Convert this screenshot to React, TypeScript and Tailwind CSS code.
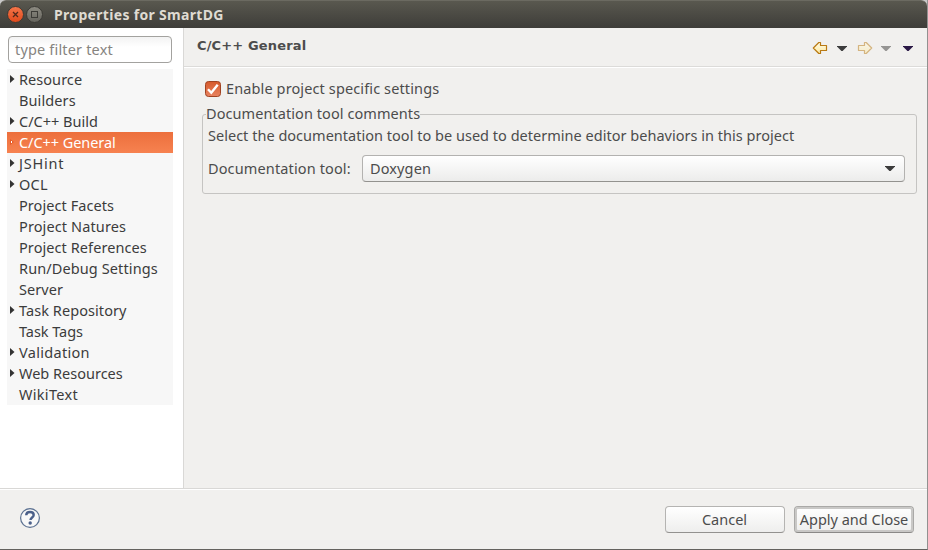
import React from "react";

type TreeItem = { label: string; expandable?: boolean; selected?: boolean; tracking: string };

const items: TreeItem[] = [
  { label: "Resource", expandable: true, tracking: "tracking-[0.05px]" },
  { label: "Builders", tracking: "tracking-[0.1px]" },
  { label: "C/C++ Build", expandable: true, tracking: "tracking-[0px]" },
  { label: "C/C++ General", expandable: true, selected: true, tracking: "tracking-[-0.06px]" },
  { label: "JSHint", expandable: true, tracking: "tracking-[0.8px]" },
  { label: "OCL", expandable: true, tracking: "tracking-[0.3px]" },
  { label: "Project Facets", tracking: "tracking-[0.07px]" },
  { label: "Project Natures", tracking: "tracking-[0.12px]" },
  { label: "Project References", tracking: "tracking-[0.08px]" },
  { label: "Run/Debug Settings", tracking: "tracking-[0.11px]" },
  { label: "Server", tracking: "tracking-[0.08px]" },
  { label: "Task Repository", expandable: true, tracking: "tracking-[0.07px]" },
  { label: "Task Tags", tracking: "tracking-[-0.05px]" },
  { label: "Validation", expandable: true, tracking: "tracking-[0.3px]" },
  { label: "Web Resources", expandable: true, tracking: "tracking-[0px]" },
  { label: "WikiText", tracking: "tracking-[0.3px]" },
];

function Caret({ className }: { className: string }) {
  return (
    <svg width="10" height="5" viewBox="0 0 10 5" className={className}>
      <path d="M0 0h10v.6L5.6 5H4.4L0 .6z" fill="currentColor" />
    </svg>
  );
}

function Arrow({ forward = false }: { forward?: boolean }) {
  return (
    <svg width="16" height="14" viewBox="0 0 16 14" className={forward ? "-scale-x-100 opacity-50" : ""}>
      <defs>
        <linearGradient id={forward ? "af" : "ab"} x1="0" y1="0" x2="0" y2="1">
          <stop offset="0" stopColor="#fffbe6" />
          <stop offset="1" stopColor="#fde9a0" />
        </linearGradient>
      </defs>
      <path d="M1.3 7 6.8 1.5H8.5V4.5H14.5V9.5H8.5V12.5H6.8z" fill={forward ? "url(#af)" : "url(#ab)"} stroke="#b97a14" strokeWidth="1.2" strokeLinejoin="round" />
    </svg>
  );
}

function TitleBar() {
  return (
    <header className="flex h-7 shrink-0 items-center rounded-t-[6px] border-t border-[#6b6a61] bg-gradient-to-b from-[#59584f] to-[#3e3d39] pl-[7px]">
      <svg width="36" height="18" viewBox="0 0 36 18">
        <defs>
          <linearGradient id="close" x1="0" y1="0" x2="0" y2="1">
            <stop offset="0" stopColor="#f5764a" />
            <stop offset="1" stopColor="#e0491b" />
          </linearGradient>
          <linearGradient id="max" x1="0" y1="0" x2="0" y2="1">
            <stop offset="0" stopColor="#8d8b82" />
            <stop offset="1" stopColor="#65645d" />
          </linearGradient>
        </defs>
        <circle cx="8.5" cy="8.5" r="8" fill="url(#close)" stroke="#3b3a35" />
        <path d="m6 6 5 5m0-5-5 5" stroke="#52291b" strokeWidth="1.3" />
        <circle cx="27.5" cy="8.5" r="8" fill="url(#max)" stroke="#3b3a35" />
        <rect x="24.5" y="5.5" width="6" height="6" fill="none" stroke="#3c3b37" />
      </svg>
      <h1 className="ml-[11px] whitespace-nowrap text-[14px] font-bold leading-5 tracking-[0.32px] text-[#dfdbd2]">Properties for SmartDG</h1>
    </header>
  );
}

function Sidebar() {
  return (
    <aside className="w-[183px] shrink-0 bg-white pl-[7px] pt-2">
      <div className="ml-px flex h-[27px] w-[164px] items-center rounded-[4px] border border-[#a3a29f] bg-gradient-to-b from-[#f3f3f3] to-white to-40% px-[6px] pb-[2px]">
        <span className="whitespace-nowrap text-[14.5px] leading-5 tracking-[0.17px] text-[#86847f]">type filter text</span>
      </div>
      <ul className="mt-[6px] w-[166px] bg-[#f7f7f7]">
        {items.map((item) => (
          <li
            key={item.label}
            className={`flex h-[21px] items-center pb-px pl-[3px] ${item.selected ? "bg-gradient-to-b from-[#ec6f3c] to-[#f78250] text-white" : "text-[#3c3c3c]"}`}
          >
            <svg width="5" height="8" viewBox="0 0 5 8" className="mr-1 shrink-0">
              {item.expandable && !item.selected && <path d="M0 0 4.5 4 0 8z" fill="#333" />}
              {item.selected && <path d="M0 1 4 4 0 7z" fill="#e55a28" />}
              {item.selected && <path d="M1 3h1v2H1z" fill="#fff" />}
            </svg>
            <span className={`whitespace-nowrap text-[14.5px] leading-5 ${item.tracking}`}>{item.label}</span>
          </li>
        ))}
      </ul>
    </aside>
  );
}

function Content() {
  return (
    <main className="flex min-w-0 flex-1 flex-col border-l border-[#d9d8d6] text-[#4c4c4c]">
      <div className="flex h-[39px] shrink-0 items-center justify-between border-b border-[#dcdbd9] pl-[13px] pr-[14px]">
        <h2 className="-mt-[3px] whitespace-nowrap font-['DejaVu_Sans',sans-serif] text-[13px] font-bold leading-5 tracking-[0.15px]">C/C++ General</h2>
        <div className="mt-[2px] flex items-center">
          <Arrow />
          <Caret className="ml-[9px] text-[#3c3c3c]" />
          <span className="ml-[10px] flex"><Arrow forward /></span>
          <Caret className="ml-[8px] text-[#969593]" />
          <Caret className="ml-[12px] text-[#2a1845]" />
        </div>
      </div>
      <div className="flex-1 border-t border-white pl-[18px] pr-[10px] pt-[12px]">
        <label className="flex h-[18px] items-center pl-[3px]">
          <svg width="16" height="16" viewBox="0 0 16 16">
            <defs>
              <linearGradient id="check" x1="0" y1="0" x2="0" y2="1">
                <stop offset="0" stopColor="#d65a2b" />
                <stop offset="1" stopColor="#e88360" />
              </linearGradient>
            </defs>
            <rect x=".5" y=".5" width="15" height="15" rx="3" fill="url(#check)" stroke="#a04322" />
            <path d="m3 8.2 3.3 3.5 6.4-8" fill="none" stroke="#fff" strokeWidth="2.4" />
          </svg>
          <span className="-mt-[2px] ml-[5px] whitespace-nowrap text-[14.5px] leading-5 tracking-[0.12px]">Enable project specific settings</span>
        </label>
        <fieldset className="mt-[5px] h-[91px] rounded-[3px] border border-[#c5c4c2] pl-[5px] pr-[11px]">
          <legend className="-ml-[2px] h-[22px] whitespace-nowrap text-[14.5px] leading-5 tracking-[0.07px]">Documentation tool comments</legend>
          <p className="whitespace-nowrap text-[14.5px] leading-5 tracking-[0.02px]">Select the documentation tool to be used to determine editor behaviors in this project</p>
          <div className="mt-[10px] flex items-center">
            <span className="-mt-[2px] w-[154px] whitespace-nowrap text-[14.5px] leading-5 tracking-[0.13px]">Documentation tool:</span>
            <div className="flex h-[27px] flex-1 items-center justify-between rounded-[4px] border border-[#b3b2b0] border-b-[#93928f] bg-gradient-to-b from-white to-[#ececeb] pl-[7px] pr-[9px]">
              <span className="-mt-[2px] text-[14.5px] leading-5 tracking-[0.12px]">Doxygen</span>
              <Caret className="text-[#3c3c3c]" />
            </div>
          </div>
        </fieldset>
      </div>
    </main>
  );
}

function Footer() {
  return (
    <footer className="flex h-[61px] shrink-0 items-center border-t border-[#d9d8d6] pl-[20px] pr-[13px] text-[#4c4c4c] shadow-[inset_0_1px_0_white]">
      <svg width="20" height="20" viewBox="0 0 20 20" className="-mt-[2px]">
        <circle cx="10" cy="10" r="9.4" fill="#f8f8f8" stroke="#5c7191" strokeWidth="1.2" />
        <path d="M6.2 7.2C6.3 4.8 8 4 10 4s3.7 1 3.7 3c0 2.5-3.2 2.5-3.2 5.1" fill="none" stroke="#4b608a" strokeWidth="2.4" />
        <circle cx="10.2" cy="15" r="1.7" fill="#4b608a" />
      </svg>
      <div className="ml-auto mt-px flex gap-[9px]">
        <button className="h-[27px] w-[120px] rounded-[4px] border border-[#b5b4b2] border-b-[#93928f] bg-gradient-to-b from-white to-[#eeeeed] pb-[2px] pr-px text-[14.5px] leading-5">Cancel</button>
        <button className="h-[27px] w-[120px] whitespace-nowrap rounded-[4px] border border-[#aaa9a7] border-b-[#8a8987] bg-gradient-to-b from-white to-[#eeeeed] pb-[2px] text-[14.5px] leading-5 shadow-[inset_0_0_0_2px_#c9c8c6]">Apply and Close</button>
      </div>
    </footer>
  );
}

export default function App() {
  return (
    <div className="h-[550px] w-[928px] overflow-hidden border-b border-r border-b-[#64625e] border-r-[#929190] bg-[#c9c9c9] font-['Noto_Sans',sans-serif]">
      <div className="flex h-full flex-col rounded-t-[6px] bg-[#f1f0ee]">
        <TitleBar />
        <div className="flex min-h-0 flex-1">
          <Sidebar />
          <Content />
        </div>
        <Footer />
      </div>
    </div>
  );
}
